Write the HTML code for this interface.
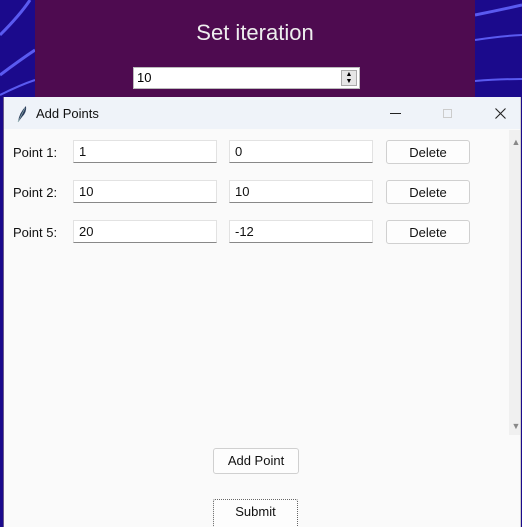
<!DOCTYPE html>
<html><head><style>
*{margin:0;padding:0;box-sizing:border-box}
body{width:522px;height:522px;overflow:hidden;position:relative;background:#1b0a8c;font-family:"Liberation Sans",sans-serif}
.abs{position:absolute}
.panel{left:35px;top:0;width:440px;height:100px;background:#4e0b50}
.title{left:35px;width:440px;top:20px;text-align:center;color:#eee;font-size:22px}
.spin{left:133px;top:67px;width:227px;height:22px;background:#fff;border:1px solid #bbb;font-size:13px;padding:2px 3px}
.win{left:3px;top:97px;width:518px;height:430px;background:#fafafa;border-left:1px solid #6a5a8a;border-right:1px solid #ccc;overflow:hidden}
.tb{left:0;top:0;width:100%;height:32px;background:#eff3f9}
.lbl{font-size:13px;color:#111}
.ent{background:#fff;border:1px solid #e2e2e2;border-bottom:1px solid #888;height:23px;font-size:13px;padding:3px 5px;color:#111}
.btn{background:#fdfdfd;border:1px solid #d0d0d0;border-radius:3px;font-size:13px;text-align:center;color:#111;line-height:23px}
.sb{left:505px;top:33px;width:14px;height:305px;background:#f0f0f0}
</style></head><body>
<svg class="abs" style="left:0;top:0" width="522" height="100">
<path d="M0 35 Q20 15 30 0" stroke="#5a5af0" stroke-width="3" fill="none"/>
<path d="M0 75 Q20 60 35 50" stroke="#5a5af0" stroke-width="3" fill="none"/>
<path d="M0 95 Q20 85 35 80" stroke="#5a5af0" stroke-width="2" fill="none"/>
<path d="M475 15 Q500 10 522 5" stroke="#5a5af0" stroke-width="3" fill="none"/>
<path d="M475 40 Q500 36 522 35" stroke="#5a5af0" stroke-width="2" fill="none"/>
<path d="M475 81 Q500 79 522 79" stroke="#5a5af0" stroke-width="2" fill="none"/>
</svg>
<div class="abs panel"></div>
<div class="abs title">Set iteration</div>
<div class="abs spin">10<div class="abs" style="right:2px;top:2px;width:16px;height:16px;background:#e6e6e6;border:1px solid #aaa;font-size:7px;line-height:7px;text-align:center">▲<br>▼</div></div>
<div class="abs win">
 <div class="abs tb">
  <svg class="abs" style="left:12px;top:8px" width="12" height="18"><path d="M2 17 Q3 8 10 1 Q11 7 6 12 L3 16 Z" fill="#2a3a5a"/><path d="M2 17 L9 3" stroke="#8aa" stroke-width="0.8"/></svg>
  <div class="abs" style="left:32px;top:9px;font-size:13px;color:#111">Add Points</div>
  <div class="abs" style="left:386px;top:16px;width:11px;height:1px;background:#222"></div>
  <div class="abs" style="left:439px;top:12px;width:9px;height:9px;border:1px solid #ccc"></div>
  <svg class="abs" style="left:491px;top:11px" width="11" height="11"><path d="M0.5 0.5 L10.5 10.5 M10.5 0.5 L0.5 10.5" stroke="#222" stroke-width="1.1"/></svg>
 </div>
 <div class="abs sb"><div style="text-align:center;font-size:9px;color:#888;margin-top:7px">▲</div><div class="abs" style="bottom:4px;width:14px;text-align:center;font-size:9px;color:#888">▼</div></div>

 <div class="abs lbl" style="left:9px;top:48px">Point 1:</div>
 <div class="abs ent" style="left:69px;top:43px;width:144px">1</div>
 <div class="abs ent" style="left:225px;top:43px;width:144px">0</div>
 <div class="abs btn" style="left:382px;top:43px;width:84px;height:24px">Delete</div>

 <div class="abs lbl" style="left:9px;top:88px">Point 2:</div>
 <div class="abs ent" style="left:69px;top:83px;width:144px">10</div>
 <div class="abs ent" style="left:225px;top:83px;width:144px">10</div>
 <div class="abs btn" style="left:382px;top:83px;width:84px;height:24px">Delete</div>

 <div class="abs lbl" style="left:9px;top:128px">Point 5:</div>
 <div class="abs ent" style="left:69px;top:123px;width:144px">20</div>
 <div class="abs ent" style="left:225px;top:123px;width:144px">-12</div>
 <div class="abs btn" style="left:382px;top:123px;width:84px;height:24px">Delete</div>

 <div class="abs btn" style="left:209px;top:351px;width:86px;height:26px;line-height:24px">Add Point</div>
 <div class="abs btn" style="left:209px;top:402px;width:85px;height:30px;border:1px dotted #666;border-radius:2px;line-height:24px">Submit</div>
</div>
</body></html>
